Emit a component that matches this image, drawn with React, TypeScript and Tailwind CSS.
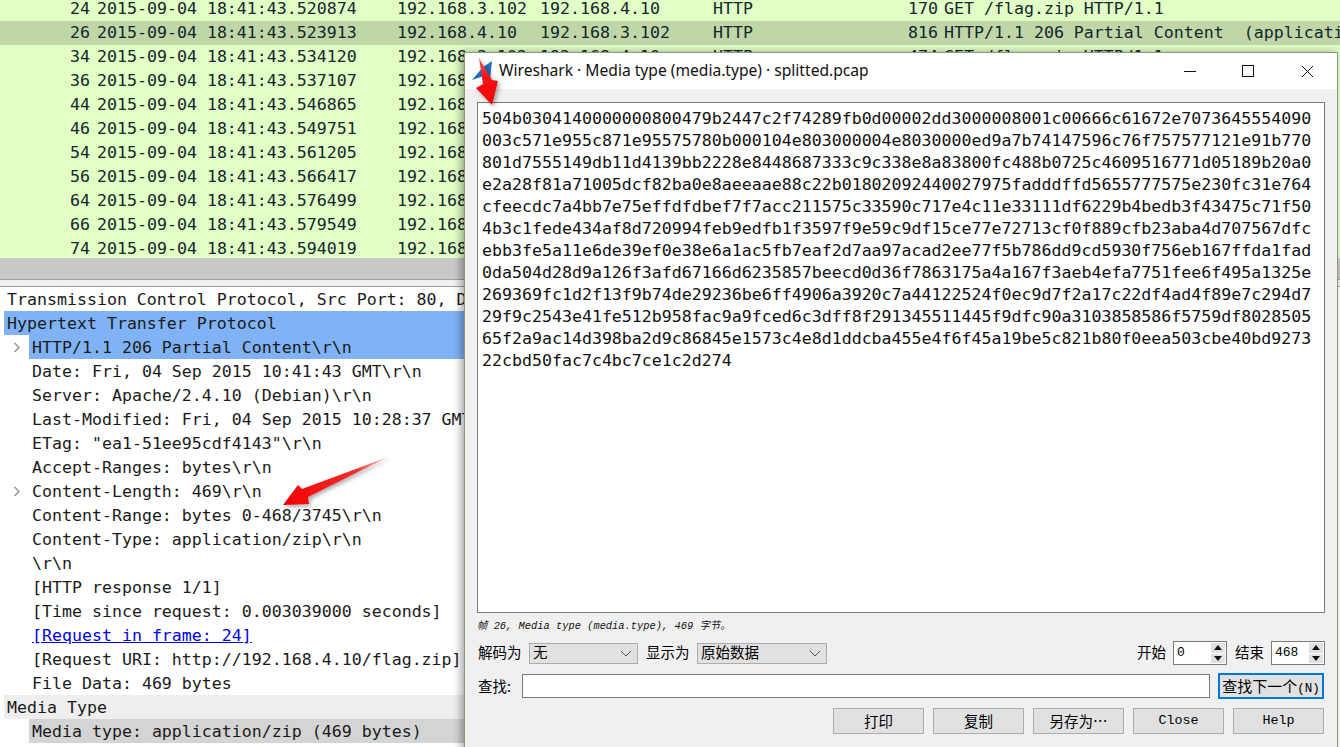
const packets = [
  ['24', '2015-09-04 18:41:43.520874', '192.168.3.102', '192.168.4.10', 'HTTP', '170', 'GET /flag.zip HTTP/1.1'],
  ['26', '2015-09-04 18:41:43.523913', '192.168.4.10', '192.168.3.102', 'HTTP', '816', 'HTTP/1.1 206 Partial Content  (application/zip)'],
  ['34', '2015-09-04 18:41:43.534120', '192.168.3.102', '192.168.4.10', 'HTTP', '474', 'GET /flag.zip HTTP/1.1'],
  ['36', '2015-09-04 18:41:43.537107', '192.168.4.10'],
  ['44', '2015-09-04 18:41:43.546865', '192.168.3.102'],
  ['46', '2015-09-04 18:41:43.549751', '192.168.4.10'],
  ['54', '2015-09-04 18:41:43.561205', '192.168.3.102'],
  ['56', '2015-09-04 18:41:43.566417', '192.168.4.10'],
  ['64', '2015-09-04 18:41:43.576499', '192.168.3.102'],
  ['66', '2015-09-04 18:41:43.579549', '192.168.4.10'],
  ['74', '2015-09-04 18:41:43.594019', '192.168.3.102'],
]

const hexLines = [
  '504b0304140000000800479b2447c2f74289fb0d00002dd3000008001c00666c61672e7073645554090',
  '003c571e955c871e95575780b000104e803000004e8030000ed9a7b74147596c76f757577121e91b770',
  '801d7555149db11d4139bb2228e8448687333c9c338e8a83800fc488b0725c4609516771d05189b20a0',
  'e2a28f81a71005dcf82ba0e8aeeaae88c22b01802092440027975fadddffd5655777575e230fc31e764',
  'cfeecdc7a4bb7e75effdfdbef7f7acc211575c33590c717e4c11e33111df6229b4bedb3f43475c71f50',
  '4b3c1fede434af8d720994feb9edfb1f3597f9e59c9df15ce77e72713cf0f889cfb23aba4d707567dfc',
  'ebb3fe5a11e6de39ef0e38e6a1ac5fb7eaf2d7aa97acad2ee77f5b786dd9cd5930f756eb167ffda1fad',
  '0da504d28d9a126f3afd67166d6235857beecd0d36f7863175a4a167f3aeb4efa7751fee6f495a1325e',
  '269369fc1d2f13f9b74de29236be6ff4906a3920c7a44122524f0ec9d7f2a17c22df4ad4f89e7c294d7',
  '29f9c2543e41fe512b958fac9a9fced6c3dff8f291345511445f9dfc90a3103858586f5759df8028505',
  '65f2a9ac14d398ba2d9c86845e1573c4e8d1ddcba455e4f6f45a19be5c821b80f0eea503cbe40bd9273',
  '22cbd50fac7c4bc7ce1c2d274',
]

const details = [
  { text: 'Transmission Control Protocol, Src Port: 80, D', level: 0, bg: '' },
  { text: 'Hypertext Transfer Protocol', level: 0, bg: 'bg-[#7fb3f6]' },
  { text: 'HTTP/1.1 206 Partial Content\\r\\n', level: 1, bg: 'bg-[#7fb3f6]', arrow: true },
  { text: 'Date: Fri, 04 Sep 2015 10:41:43 GMT\\r\\n', level: 1, bg: '' },
  { text: 'Server: Apache/2.4.10 (Debian)\\r\\n', level: 1, bg: '' },
  { text: 'Last-Modified: Fri, 04 Sep 2015 10:28:37 GMT', level: 1, bg: '' },
  { text: 'ETag: "ea1-51ee95cdf4143"\\r\\n', level: 1, bg: '' },
  { text: 'Accept-Ranges: bytes\\r\\n', level: 1, bg: '' },
  { text: 'Content-Length: 469\\r\\n', level: 1, bg: '', arrow: true },
  { text: 'Content-Range: bytes 0-468/3745\\r\\n', level: 1, bg: '' },
  { text: 'Content-Type: application/zip\\r\\n', level: 1, bg: '' },
  { text: '\\r\\n', level: 1, bg: '' },
  { text: '[HTTP response 1/1]', level: 1, bg: '' },
  { text: '[Time since request: 0.003039000 seconds]', level: 1, bg: '' },
  { text: '[Request in frame: 24]', level: 1, bg: '', link: true },
  { text: '[Request URI: http://192.168.4.10/flag.zip]', level: 1, bg: '' },
  { text: 'File Data: 469 bytes', level: 1, bg: '' },
  { text: 'Media Type', level: 0, bg: 'bg-[#eeeeee]' },
  { text: 'Media type: application/zip (469 bytes)', level: 1, bg: 'bg-[#d4d4d4]' },
]

const mono = "font-['DejaVu_Sans_Mono',monospace] text-[16.6px]"
const cjk = "font-['Noto_Sans_CJK_SC',sans-serif]"

function PacketList() {
  return (
    <div className="h-[258px] overflow-hidden bg-[#e2ffc6]">
      <div className="-mt-[3px]">
        {packets.map((p, i) => (
          <div
            key={p[0]}
            className={`flex h-6 items-center whitespace-pre text-[#12272e] ${mono} ${i === 1 ? 'bg-[#c1d6a7]' : 'bg-[#e2ffc6]'}`}
          >
            <span className="w-[90px] shrink-0 text-right">{p[0]}</span>
            <span className="ml-[7px] w-[300px] shrink-0">{p[1]}</span>
            {p.length > 3 ? (
              <>
                <span className="w-[143px] shrink-0">{p[2]}</span>
                <span className="w-[173px] shrink-0">{p[3]}</span>
                <span className="w-[195px] shrink-0">{p[4]}</span>
                <span className="w-[30px] shrink-0 text-right">{p[5]}</span>
                <span className="ml-[6px] shrink-0">{p[6]}</span>
              </>
            ) : (
              <span className="w-[67px] shrink-0 overflow-hidden">{p[2]}</span>
            )}
          </div>
        ))}
      </div>
    </div>
  )
}

function DetailTree() {
  return (
    <div className={`h-[460px] w-[464px] overflow-hidden bg-white pl-1 text-[#1a1a1a] ${mono}`}>
      {details.map((d) => (
        <div key={d.text} className={`relative flex h-6 items-center whitespace-pre pt-[2px] ${d.level === 1 ? 'ml-[25px] pl-[3px]' : 'pl-[3px]'} ${d.bg}`}>
          {d.arrow && (
            <svg className="absolute -left-[18px] top-[6px]" width="12" height="12" viewBox="0 0 12 12" fill="none">
              <path d="M3.5 2l4.5 4.5-4.5 4.5" stroke="#9a9a9a" strokeWidth="1.6" />
            </svg>
          )}
          <span className={d.link ? 'text-[#0000ee] underline' : ''}>{d.text}</span>
        </div>
      ))}
    </div>
  )
}

function Chevron() {
  return (
    <svg width="12" height="7" viewBox="0 0 12 7" fill="none">
      <path d="M1 1l5 5 5-5" stroke="#555" strokeWidth="1" />
    </svg>
  )
}

function ComboBox({ value, width }: { value: string; width: string }) {
  return (
    <div className={`flex h-[21px] items-center justify-between border border-[#adadad] bg-[#e1e1e1] pl-[3px] pr-[5px] text-[14.5px] text-black ${cjk} ${width}`}>
      <span className="-translate-y-px">{value}</span>
      <Chevron />
    </div>
  )
}

function SpinBox({ value, width }: { value: string; width: string }) {
  return (
    <div className={`flex h-6 items-stretch border border-[#7a7a7a] bg-white ${width}`}>
      <span className="flex-1 pl-[3px] font-['Liberation_Mono',monospace] text-[13px] leading-[22px] text-black">{value}</span>
      <div className="my-[1px] mr-[1px] flex w-[14px] flex-col gap-[1px]">
        <div className="flex flex-1 items-center justify-center bg-[#e1e1e1]">
          <svg width="8" height="5" viewBox="0 0 8 5"><path d="M4 0l4 5H0z" fill="#111" /></svg>
        </div>
        <div className="flex flex-1 items-center justify-center bg-[#e1e1e1]">
          <svg width="8" height="5" viewBox="0 0 8 5"><path d="M0 0h8L4 5z" fill="#111" /></svg>
        </div>
      </div>
    </div>
  )
}

function DialogButton({ label, latin }: { label: string; latin?: boolean }) {
  return (
    <button
      type="button"
      className={`flex h-[26px] w-[91px] items-center justify-center border border-[#adadad] bg-[#e1e1e1] text-black ${latin ? "font-['Liberation_Mono',monospace] text-[13.4px]" : `${cjk} text-[14.5px]`}`}
    >
      {label}
    </button>
  )
}

function MediaDialog() {
  return (
    <div className="absolute left-[464px] top-[52px] flex h-[700px] w-[874px] flex-col border border-[#8a9a80] bg-[#f0f0f0] shadow-[-3px_0_8px_rgba(0,0,0,0.35)]">
      <div className="flex h-9 items-center bg-white">
        <svg className="ml-[7px]" width="21" height="22" viewBox="0 0 21 22">
          <path d="M0 20L11 7 20 1l-2 19c-3-5-6-5-9-3z" fill="#1d6fc4" />
        </svg>
        <span className="ml-[6px] font-['Noto_Sans',sans-serif] text-[15.6px] text-[#111]">
          Wireshark · Media type (media.type) · splitted.pcap
        </span>
        <div className="ml-auto flex items-center pr-[23px]">
          <svg width="14" height="12" viewBox="0 0 14 12"><path d="M1 6.5h12" stroke="#111" /></svg>
          <svg className="ml-[45px]" width="12" height="12" viewBox="0 0 12 12" fill="none"><rect x="0.5" y="0.5" width="11" height="11" stroke="#111" /></svg>
          <svg className="ml-[47px]" width="13" height="13" viewBox="0 0 13 13" fill="none"><path d="M1 1l11 11M12 1L1 12" stroke="#111" /></svg>
        </div>
      </div>
      <div className="flex flex-1 flex-col px-3 pt-[13px]">
        <div className={`h-[511px] border border-[#7a7a7a] bg-white px-1 pt-[5px] leading-[22px] text-[#111] ${mono}`}>
          {hexLines.map((line) => (
            <div key={line} className="h-[22px] whitespace-pre">{line}</div>
          ))}
        </div>
        <div className="mt-[7px] h-[13px] font-['Liberation_Mono','Noto_Sans_CJK_SC',monospace] text-[10.4px] italic leading-[13px] text-[#111]">
          帧 26, Media type (media.type), 469 字节。
        </div>
        <div className={`mt-[8px] flex h-6 items-center text-[14.5px] text-black ${cjk}`}>
          <span className="ml-[1px] w-[51px] -translate-y-px">解码为</span>
          <ComboBox value="无" width="w-[109px]" />
          <span className="ml-2 w-[51px] -translate-y-px">显示为</span>
          <ComboBox value="原始数据" width="w-[130px]" />
          <span className="ml-auto mr-[7px] -translate-y-px">开始</span>
          <SpinBox value="0" width="w-[54px]" />
          <span className="ml-[8px] mr-[7px] -translate-y-px">结束</span>
          <SpinBox value="468" width="w-[54px]" />
        </div>
        <div className={`mt-[8px] flex h-[26px] items-center text-[14.5px] text-black ${cjk}`}>
          <span className="ml-[1px] w-[44px]">查找:</span>
          <div className="h-6 w-[688px] border border-[#7a7a7a] bg-white" />
          <button type="button" className="ml-2 h-[26px] w-[106px] whitespace-nowrap border-2 border-[#0078d7] bg-[#e1e1e1] text-[15px]">
            查找下一个<span className="font-['Liberation_Mono',monospace] text-[12.5px]">(N)</span>
          </button>
        </div>
        <div className="mt-[9px] flex justify-end gap-[9px] pr-[1px]">
          <DialogButton label="打印" />
          <DialogButton label="复制" />
          <DialogButton label="另存为…" />
          <DialogButton label="Close" latin />
          <DialogButton label="Help" latin />
        </div>
      </div>
    </div>
  )
}

function RedArrows() {
  return (
    <svg className="pointer-events-none absolute left-0 top-0" width="1340" height="747" viewBox="0 0 1340 747">
      <defs>
        <linearGradient id="arrowA" x1="388" y1="457" x2="283" y2="505" gradientUnits="userSpaceOnUse">
          <stop offset="0" stopColor="#f4d0c8" />
          <stop offset="0.3" stopColor="#f03030" />
          <stop offset="1" stopColor="#f20000" />
        </linearGradient>
        <linearGradient id="arrowB" x1="479" y1="58" x2="492" y2="105" gradientUnits="userSpaceOnUse">
          <stop offset="0" stopColor="#e86060" />
          <stop offset="0.4" stopColor="#f01818" />
          <stop offset="1" stopColor="#f20000" />
        </linearGradient>
        <filter id="arrowShadow" x="-30%" y="-30%" width="160%" height="160%">
          <feDropShadow dx="2" dy="2" stdDeviation="2" floodColor="#000" floodOpacity="0.35" />
        </filter>
      </defs>
      <path d="M388 457L302 489l-4-4-15 20 26-1-1-7z" fill="url(#arrowA)" filter="url(#arrowShadow)" />
      <path d="M479 58l13 22 6 1-6 24-16-17 7-4z" fill="url(#arrowB)" filter="url(#arrowShadow)" />
    </svg>
  )
}

export default function App() {
  return (
    <div className="relative h-[747px] w-[1340px] overflow-hidden bg-white">
      <PacketList />
      <div className="h-[21px] bg-[#c9c9c9]" />
      <div className="h-[8px] border-y border-[#a0a0a0] bg-[#f0f0f0]" />
      <DetailTree />
      <MediaDialog />
      <RedArrows />
    </div>
  )
}
